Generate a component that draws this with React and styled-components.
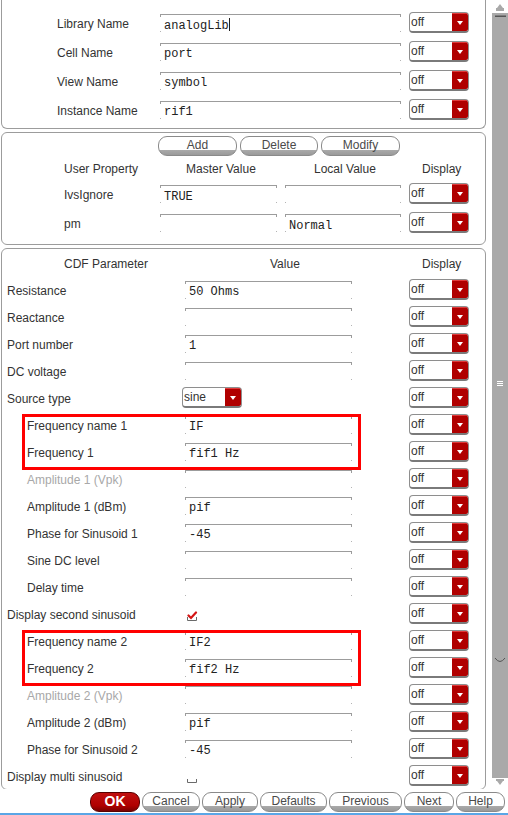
import React from "react";
import styled, { createGlobalStyle } from "styled-components";

const GlobalStyle = createGlobalStyle`
  html, body {
    margin: 0;
    padding: 0;
    background: #fff;
  }
  body {
    font-family: "Liberation Sans", Arial, sans-serif;
    font-size: 12px;
    color: #333;
  }
`;

const instanceRows = [
  { label: "Library Name", value: "analogLib", caret: true },
  { label: "Cell Name", value: "port" },
  { label: "View Name", value: "symbol" },
  { label: "Instance Name", value: "rif1" },
];

const propRows = [
  { label: "IvsIgnore", master: "TRUE", local: "" },
  { label: "pm", master: "", local: "Normal" },
];

const cdfRows = [
  { label: "Resistance", value: "50 Ohms" },
  { label: "Reactance", value: "" },
  { label: "Port number", value: "1" },
  { label: "DC voltage", value: "" },
  { label: "Source type", select: "sine" },
  { label: "Frequency name 1", value: "IF", indent: true, group: 1 },
  { label: "Frequency 1", value: "fif1 Hz", indent: true, group: 1 },
  { label: "Amplitude 1 (Vpk)", value: "", indent: true, muted: true },
  { label: "Amplitude 1 (dBm)", value: "pif", indent: true },
  { label: "Phase for Sinusoid 1", value: "-45", indent: true },
  { label: "Sine DC level", value: "", indent: true },
  { label: "Delay time", value: "", indent: true },
  { label: "Display second sinusoid", check: true },
  { label: "Frequency name 2", value: "IF2", indent: true, group: 2 },
  { label: "Frequency 2", value: "fif2 Hz", indent: true, group: 2 },
  { label: "Amplitude 2 (Vpk)", value: "", indent: true, muted: true },
  { label: "Amplitude 2 (dBm)", value: "pif", indent: true },
  { label: "Phase for Sinusoid 2", value: "-45", indent: true },
  { label: "Display multi sinusoid", check: false },
];

const footerButtons = [
  { text: "OK", w: 50, primary: true },
  { text: "Cancel", w: 58 },
  { text: "Apply", w: 56 },
  { text: "Defaults", w: 67 },
  { text: "Previous", w: 73 },
  { text: "Next", w: 50 },
  { text: "Help", w: 49 },
];

const DisplaySelect = ({ value = "off" }) => (
  <Select>
    <SelectText>{value}</SelectText>
    <SelectArrow />
  </Select>
);

const Checkbox = ({ checked }) => (
  <CheckWrap>
    <svg width="12" height="10" viewBox="0 0 12 10">
      <path d="M1.5 6 V9.5 H10.5 V6" fill="none" stroke="#6a6a6a" strokeWidth="1" />
      {checked && (
        <path
          d="M2.5 4.5 L5 7 L10 1.5"
          fill="none"
          stroke="#d41414"
          strokeWidth="2.2"
          strokeLinecap="round"
        />
      )}
    </svg>
  </CheckWrap>
);

const CdfRow = ({ row }) => (
  <Row $cols="180px 227px 60px" $h={27}>
    <Label $indent={row.indent ? 25 : 5} $muted={row.muted}>
      {row.label}
    </Label>
    {row.select ? (
      <DisplaySelect value={row.select} />
    ) : row.check !== undefined ? (
      <Checkbox checked={row.check} />
    ) : (
      <Field $w={167} $ml={3}>
        {row.value}
      </Field>
    )}
    <DisplaySelect />
  </Row>
);

const App = () => {
  const chunks = [];
  cdfRows.forEach((row) => {
    const last = chunks[chunks.length - 1];
    if (row.group && last && last.group === row.group) last.rows.push(row);
    else chunks.push({ group: row.group, rows: [row] });
  });

  return (
    <>
      <GlobalStyle />
      <Window>
        <Main>
          <Content>
            <Panel $open $pad="8px 0 4px">
              {instanceRows.map((r) => (
                <Row key={r.label} $cols="158px 249px 60px" $h={29}>
                  <Label $indent={55}>{r.label}</Label>
                  <Field $w={241}>
                    {r.value}
                    {r.caret && <Caret />}
                  </Field>
                  <DisplaySelect />
                </Row>
              ))}
            </Panel>

            <Panel $pad="3px 0 7px">
              <ButtonRow>
                <PillButton $w={79}>Add</PillButton>
                <PillButton $w={78}>Delete</PillButton>
                <PillButton $w={79}>Modify</PillButton>
              </ButtonRow>
              <Row $cols="158px 125px 124px 60px" $h={22}>
                <Label $indent={62}>User Property</Label>
                <Label $indent={26}>Master Value</Label>
                <Label $indent={29}>Local Value</Label>
                <Label $indent={13}>Display</Label>
              </Row>
              {propRows.map((r) => (
                <Row key={r.label} $cols="158px 125px 124px 60px" $h={29}>
                  <Label $indent={62}>{r.label}</Label>
                  <Field $w={117} $low>{r.master}</Field>
                  <Field $w={116} $low>{r.local}</Field>
                  <DisplaySelect />
                </Row>
              ))}
            </Panel>

            <Panel $grow>
              <Row $cols="180px 227px 60px" $h={27}>
                <Label $indent={62}>CDF Parameter</Label>
                <Label $indent={88}>Value</Label>
                <Label $indent={13}>Display</Label>
              </Row>
              {chunks.map((c, i) =>
                c.group ? (
                  <Highlight key={i}>
                    {c.rows.map((r) => (
                      <CdfRow key={r.label} row={r} />
                    ))}
                  </Highlight>
                ) : (
                  c.rows.map((r) => <CdfRow key={r.label} row={r} />)
                )
              )}
            </Panel>
          </Content>

          <Scrollbar>
            <ScrollTop>
              <svg width="16" height="17" viewBox="0 0 16 17">
                <rect x="0" y="0" width="16" height="13" fill="#fff" />
                <path d="M8 4 L11 8 H5 Z" fill="#a9a9a9" />
                <rect x="4" y="8" width="8" height="3" fill="#a9a9a9" />
                <rect x="3" y="15.5" width="11" height="1.5" fill="#555" />
              </svg>
            </ScrollTop>
            <Trough>
              <Grip>
                <svg width="6" height="7" viewBox="0 0 6 7">
                  <path d="M0 1.5 H6 M0 3.5 H6 M0 5.5 H6" stroke="#fff" strokeWidth="1" />
                </svg>
              </Grip>
              <ThumbEnd>
                <svg width="12" height="6" viewBox="0 0 12 6">
                  <path d="M1 1 Q6 8 11 1" fill="none" stroke="#555" strokeWidth="1" />
                </svg>
              </ThumbEnd>
            </Trough>
            <ScrollBottom>
              <svg width="16" height="9" viewBox="0 0 16 9">
                <rect x="0" y="0" width="16" height="9" fill="#fff" />
                <rect x="4" y="1" width="8" height="2" fill="#a9a9a9" />
                <path d="M8 7 L11 3 H5 Z" fill="#a9a9a9" />
              </svg>
            </ScrollBottom>
          </Scrollbar>
        </Main>

        <Footer>
          {footerButtons.map((b) => (
            <PillButton key={b.text} $w={b.w} $primary={b.primary}>
              {b.text}
            </PillButton>
          ))}
        </Footer>
        <StatusLine />
      </Window>
    </>
  );
};

export default App;

const Window = styled.div`
  width: 508px;
  height: 815px;
  display: flex;
  flex-direction: column;
  background: #fff;
  overflow: hidden;
`;

const Main = styled.div`
  display: flex;
  height: 789px;
  overflow: hidden;
  flex-shrink: 0;
`;

const Content = styled.div`
  width: 492px;
  display: flex;
  flex-direction: column;
  gap: 3px;
`;

const Panel = styled.section`
  margin-left: 1px;
  width: 485px;
  box-sizing: border-box;
  flex-shrink: 0;
  border: 1px solid #9c9c9c;
  border-radius: 6px;
  padding: ${(p) => p.$pad || "0"};
  ${(p) =>
    p.$open &&
    `
    border-top: none;
    border-top-left-radius: 0;
    border-top-right-radius: 0;
  `}
  ${(p) => p.$grow && "flex-grow: 1;"}
`;

const Row = styled.div`
  display: grid;
  grid-template-columns: ${(p) => p.$cols};
  height: ${(p) => p.$h}px;
  align-items: center;
`;

const Label = styled.span`
  padding-left: ${(p) => p.$indent || 0}px;
  padding-top: 2px;
  color: ${(p) => (p.$muted ? "#a8a8a8" : "#333")};
  font-size: 12px;
  white-space: nowrap;
`;

const Field = styled.div`
  position: relative;
  box-sizing: border-box;
  width: ${(p) => p.$w}px;
  height: 18px;
  margin-left: ${(p) => p.$ml || 0}px;
  border-top: 1px solid #9c9c9c;
  padding: ${(p) => (p.$low ? "4px" : "3px")} 0 0 4px;
  font-family: "Liberation Mono", "Courier New", monospace;
  font-size: 12px;
  line-height: 14px;
  color: #222;
  white-space: pre;

  &::before,
  &::after {
    content: "";
    position: absolute;
    top: 0;
    width: 1px;
    height: 100%;
    background: linear-gradient(
      #9c9c9c 0,
      #9c9c9c 2px,
      transparent 2px,
      transparent calc(100% - 1px),
      #b4b4b4 calc(100% - 1px)
    );
  }
  &::before {
    left: 0;
  }
  &::after {
    right: 0;
  }
`;

const Caret = styled.span`
  display: inline-block;
  width: 1px;
  height: 13px;
  background: #222;
  vertical-align: -2px;
`;

const Select = styled.div`
  width: 60px;
  height: 21px;
  box-sizing: border-box;
  display: flex;
  background: #fff;
  border: 1px solid #8e8e8e;
  border-bottom: 2px solid #7a7a7a;
  border-radius: 4px;
  overflow: hidden;
`;

const SelectText = styled.span`
  flex: 1;
  padding-left: 1px;
  font-size: 12px;
  line-height: 18px;
  color: #333;
`;

const SelectArrow = styled.span`
  width: 16px;
  background: #b00000;
  border-top: 1px solid #e23c3c;
  display: flex;
  align-items: center;
  justify-content: center;

  &::before {
    content: "";
    border-left: 3px solid transparent;
    border-right: 3px solid transparent;
    border-top: 4px solid #fff;
  }
`;

const CheckWrap = styled.span`
  display: flex;
  margin: 4px 0 0 4px;
`;

const ButtonRow = styled.div`
  display: flex;
  gap: 3px;
  height: 21px;
  padding-left: 156px;
`;

const PillButton = styled.div`
  width: ${(p) => p.$w}px;
  height: 20px;
  box-sizing: border-box;
  border: 1px solid ${(p) => (p.$primary ? "#5a0000" : "#8a8a8a")};
  border-radius: 9px;
  background: ${(p) =>
    p.$primary
      ? "linear-gradient(#c01010 0, #b00000 70%, #7a0000 100%)"
      : "linear-gradient(#fff 0, #fff 72%, #aaaaaa 72%, #9a9a9a 100%)"};
  color: ${(p) => (p.$primary ? "#fff" : "#4a4a4a")};
  font-family: "Liberation Sans", Arial, sans-serif;
  font-size: ${(p) => (p.$primary ? "14px" : "12px")};
  font-weight: ${(p) => (p.$primary ? "bold" : "normal")};
  line-height: 16px;
  text-align: center;
  flex-shrink: 0;
`;

const Highlight = styled.div`
  position: relative;

  &::after {
    content: "";
    position: absolute;
    top: 3px;
    bottom: -5px;
    left: 20px;
    width: 339px;
    box-sizing: border-box;
    border: 3px solid #ff0000;
    pointer-events: none;
  }
`;

const Scrollbar = styled.div`
  width: 16px;
  height: 787px;
  display: flex;
  flex-direction: column;
  background: #a9a9a9;
`;

const ScrollTop = styled.div`
  height: 17px;
  display: flex;
`;

const Trough = styled.div`
  flex: 1;
  display: flex;
  flex-direction: column;
  align-items: center;
`;

const Grip = styled.div`
  display: flex;
  margin-top: 363px;
`;

const ThumbEnd = styled.div`
  display: flex;
  margin-top: 270px;
`;

const ScrollBottom = styled.div`
  height: 9px;
  display: flex;
`;

const Footer = styled.div`
  height: 24px;
  box-sizing: border-box;
  padding: 3px 0 0 90px;
  display: flex;
  gap: 2px;
`;

const StatusLine = styled.div`
  height: 2px;
  background: #5aa6e6;
`;
